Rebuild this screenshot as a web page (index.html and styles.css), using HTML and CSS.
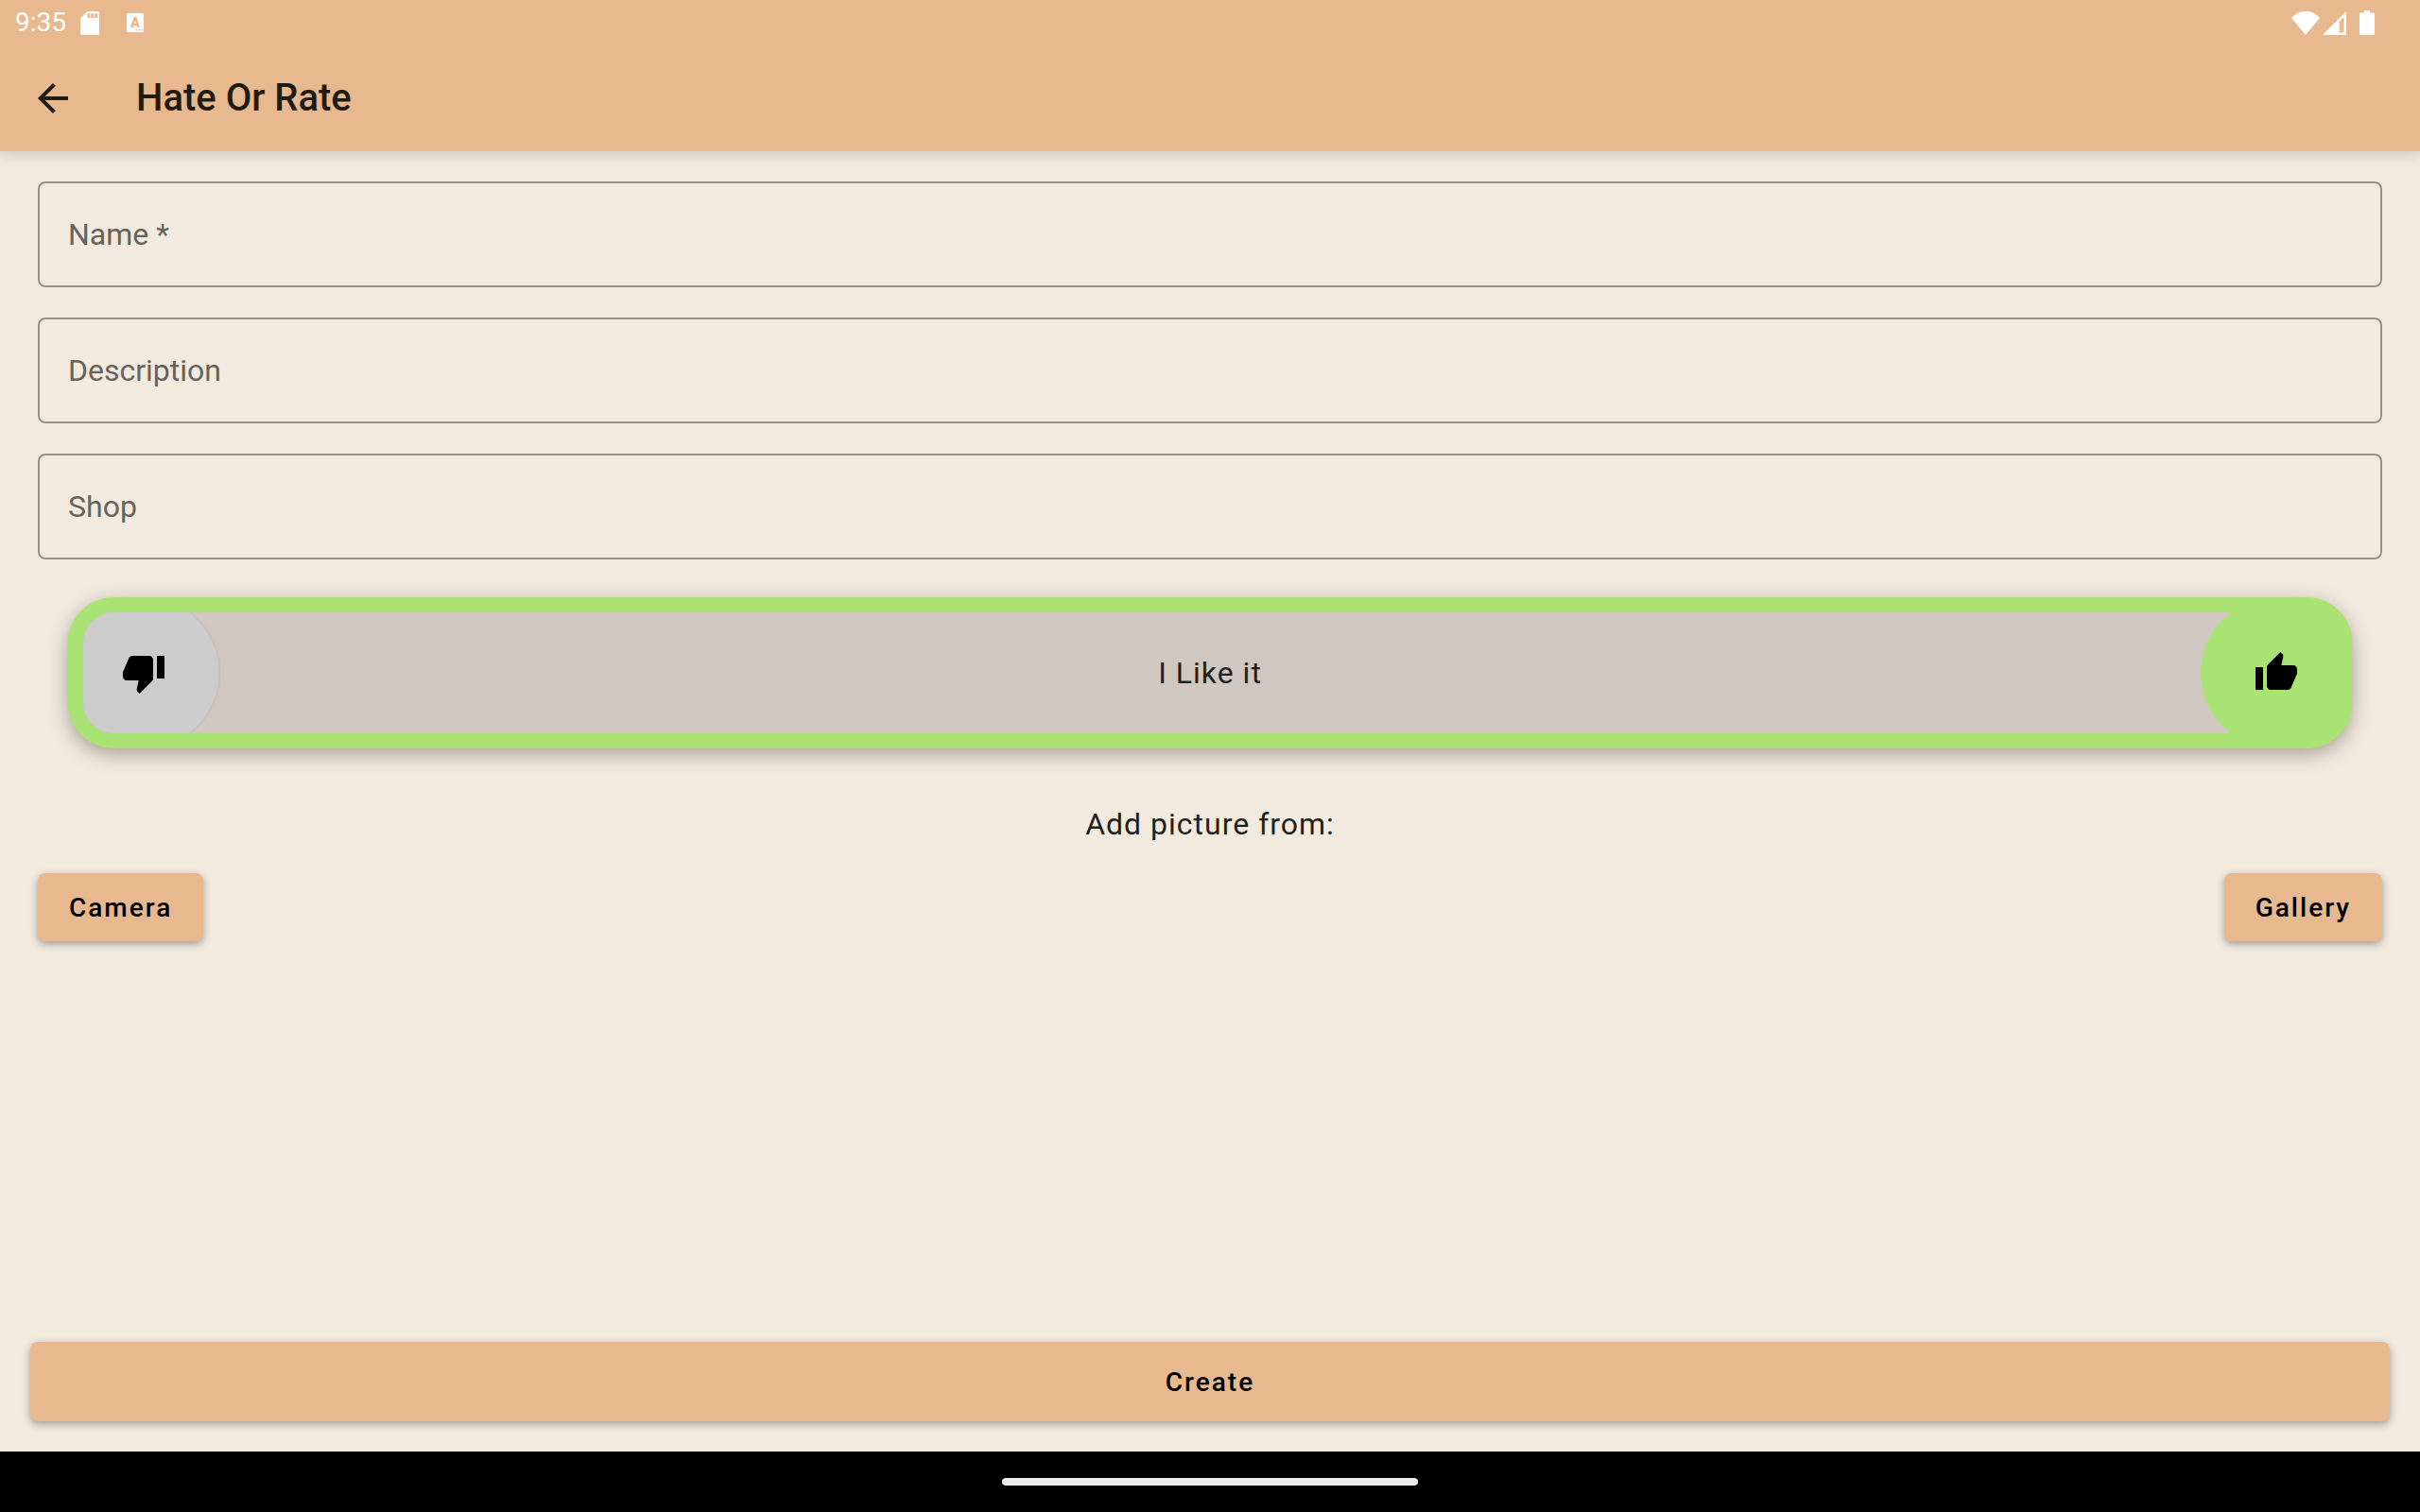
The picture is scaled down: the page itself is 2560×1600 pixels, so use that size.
FILE: index.html
```html
<!DOCTYPE html>
<html lang="en">
<head>
  <meta charset="utf-8">
  <meta name="viewport" content="width=device-width, initial-scale=1">
  <title>Hate Or Rate</title>
  <link rel="stylesheet" href="styles.css">
</head>
<body>
  <header class="top">
    <div class="status">
      <div class="status-group">
        <span class="time">9:35</span>
        <svg class="icon-card" viewBox="4 2 16 20" aria-hidden="true"><path fill-rule="evenodd" d="M18.500 2H10L4 8v12.500c0 .9.600 1.500 1.500 1.500h13c.9 0 1.500-.6 1.500-1.500v-17c0-.9-.6-1.500-1.500-1.500zM12.200 7.600h-2.200V3.800h2.200zm3.200 0h-2.400V3.800h2.400zm3.200 0h-2.400V3.800h2.400z"/></svg>
        <svg class="icon-a" viewBox="0 0 18 20" aria-hidden="true"><path fill-rule="evenodd" d="M1 0h16a1 1 0 0 1 1 1v18a1 1 0 0 1-1 1H1a1 1 0 0 1-1-1V1a1 1 0 0 1 1-1zM7.700 4 4 15h2.900l.6-2h3.100l.6 2h2.800L10.300 4zM9 7.600l1 3.400H8zM9.500 17v1.500H11V17zm3 0v1.500H14V17zm3 0v1.500H17V17z"/></svg>
      </div>
      <div class="status-group signals">
        <svg class="icon-wifi" viewBox="0 0 30 25" aria-hidden="true"><path d="M15 25 0 7C4 2.500 9 0 15 0s11 2.500 15 7z"/></svg>
        <svg class="icon-cell" viewBox="0 0 25 25" aria-hidden="true"><path fill-rule="evenodd" d="M25 0v25H0zM22.500 6 17.500 11V22.500h5z"/></svg>
        <svg class="icon-battery" viewBox="0 0 16 26" aria-hidden="true"><path d="M5 0h6v2.500h3.500A1.500 1.500 0 0 1 16 4v20.500a1.500 1.500 0 0 1-1.500 1.500h-13A1.500 1.500 0 0 1 0 24.500V4a1.500 1.500 0 0 1 1.500-1.500H5z"/></svg>
      </div>
    </div>
    <div class="app-bar">
      <button class="back" type="button" aria-label="Back">
        <svg viewBox="0 0 24 24" aria-hidden="true"><path d="M20 11H7.830l5.590-5.590L12 4l-8 8 8 8 1.410-1.410L7.830 13H20v-2z"/></svg>
      </button>
      <h1 class="title">Hate Or Rate</h1>
    </div>
  </header>

  <main class="main">
    <form class="form">
      <div class="content">
        <label class="field"><span class="field-label">Name *</span><input class="field-input" type="text" name="name" required></label>
        <label class="field"><span class="field-label">Description</span><input class="field-input" type="text" name="description"></label>
        <label class="field"><span class="field-label">Shop</span><input class="field-input" type="text" name="shop"></label>

        <div class="rating" role="radiogroup" aria-label="Rating">
          <div class="rating-track">
            <label class="choice choice-hate">
              <input class="choice-input" type="radio" name="rating" value="hate" aria-label="I hate it">
              <svg class="thumb" viewBox="0 0 24 24" aria-hidden="true"><path d="M15 3H6c-.83 0-1.540.5-1.840 1.220l-3.020 7.050c-.09.230-.14.470-.14.730v2c0 1.100.9 2 2 2h6.310l-.95 4.570-.03.320c0 .410.170.790.440 1.060L9.830 23l6.590-6.590c.36-.36.580-.86.580-1.410V5c0-1.100-.9-2-2-2zm4 0v12h4V3h-4z"/></svg>
            </label>
            <span class="rating-text">I Like it</span>
          </div>
          <label class="choice choice-like">
            <input class="choice-input" type="radio" name="rating" value="like" aria-label="I like it" checked>
            <svg class="thumb" viewBox="0 0 24 24" aria-hidden="true"><path d="M1 21h4V9H1v12zm22-11c0-1.100-.9-2-2-2h-6.310l.95-4.570.03-.32c0-.41-.17-.79-.44-1.060L14.170 1 7.590 7.590C7.220 7.950 7 8.450 7 9v10c0 1.100.9 2 2 2h9c.83 0 1.540-.5 1.840-1.220l3.020-7.050c.09-.23.140-.47.140-.73v-2z"/></svg>
          </label>
        </div>

        <p class="caption">Add picture from:</p>
        <div class="sources">
          <button class="button" type="button">Camera</button>
          <button class="button" type="button">Gallery</button>
        </div>
      </div>
      <button class="button create" type="submit">Create</button>
    </form>
  </main>

  <footer class="nav"><div class="nav-handle"></div></footer>
</body>
</html>
```
FILE: styles.css
```css
* {
  box-sizing: border-box;
}

body {
  margin: 0;
  min-height: 100vh;
  display: flex;
  flex-direction: column;
  background: #f2eadf;
  color: #1f1f1c;
  font: 400 32px/48px Roboto, sans-serif;
  letter-spacing: 1px;
}

svg {
  display: block;
  fill: currentColor;
}

.top {
  background: #e8b98f;
  box-shadow: 0 4px 12px rgba(0, 0, 0, 0.14);
}

.status {
  display: flex;
  justify-content: space-between;
  height: 48px;
  padding: 0 48px 0 16px;
  color: #fff;
}

.status-group {
  display: flex;
  align-items: center;
}

.time {
  margin-right: 15px;
  font-size: 28px;
  letter-spacing: 0;
}

.icon-card {
  width: 20px;
  height: 25px;
  margin-right: 29px;
}

.icon-a {
  width: 18px;
  height: 20px;
}

.icon-wifi {
  width: 30px;
  height: 25px;
  margin-right: 3px;
}

.icon-cell {
  width: 25px;
  height: 25px;
  margin-right: 14px;
}

.icon-battery {
  width: 16px;
  height: 26px;
}

.app-bar {
  display: flex;
  align-items: center;
  gap: 64px;
  height: 112px;
  padding: 0 32px;
  color: #1f1b13;
}

.back {
  padding: 0;
  border: 0;
  background: none;
  color: inherit;
}

.back svg,
.thumb {
  width: 48px;
  height: 48px;
}

.title {
  margin: 0;
  font-size: 40px;
  font-weight: 500;
  letter-spacing: 0;
}

.main,
.form {
  flex: 1;
  display: flex;
  flex-direction: column;
}

.form {
  padding: 32px;
}

.content {
  flex: 1;
  display: flex;
  flex-direction: column;
  padding: 0 8px;
}

.field {
  display: grid;
  align-items: center;
  margin-bottom: 32px;
  color: #66625c;
  letter-spacing: 0;
}

.field-label,
.field-input {
  grid-area: 1 / 1;
}

.field-label {
  padding: 0 32px;
}

.field-input {
  width: 100%;
  height: 112px;
  padding: 0 30px;
  border: 2px solid #989087;
  border-radius: 8px;
  background: none;
  color: #1f1f1c;
  font: inherit;
}

.rating {
  display: grid;
  margin: 8px 32px 56px;
  border-radius: 48px;
  background: #a8e374;
  box-shadow: 0 6px 20px rgba(60, 50, 40, 0.4);
}

.rating-track {
  grid-area: 1 / 1;
  display: grid;
  align-items: center;
  height: 128px;
  margin: 16px;
  border-radius: 32px;
  background: #cfc7c0;
  overflow: hidden;
}

.choice {
  display: grid;
  place-items: center;
  width: 160px;
  height: 160px;
  border-radius: 80px;
  color: #000;
}

.choice-input {
  grid-area: 1 / 1;
  width: 100%;
  height: 100%;
  margin: 0;
  appearance: none;
}

.thumb {
  grid-area: 1 / 1;
}

.choice-hate {
  grid-area: 1 / 1;
  margin: -16px;
  background: #ccc;
  box-shadow: 0 0 2px rgba(160, 140, 110, 0.5);
}

.choice-like {
  grid-area: 1 / 1;
  justify-self: end;
  border-radius: 80px 48px 48px 80px;
  background: #a8e374;
}

.rating-text {
  grid-area: 1 / 1;
  justify-self: center;
}

.caption {
  margin: 0 0 28px;
  text-align: center;
}

.sources {
  display: flex;
  justify-content: space-between;
}

.button {
  height: 72px;
  padding: 2px 33px 0;
  border: 0;
  border-radius: 8px;
  background: #e8b98f;
  box-shadow: 0 3px 8px rgba(0, 0, 0, 0.34);
  color: #000;
  font: 500 28px/32px Roboto, sans-serif;
  letter-spacing: 2px;
}

.create {
  height: 84px;
}

.nav {
  display: grid;
  place-items: center;
  height: 64px;
  background: #000;
}

.nav-handle {
  width: 440px;
  height: 8px;
  border-radius: 4px;
  background: #ebebeb;
}
```
